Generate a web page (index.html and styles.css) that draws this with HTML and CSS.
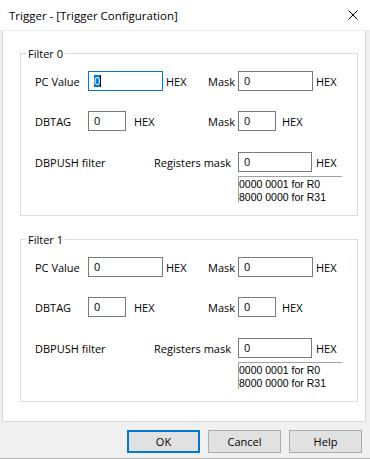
FILE: index.html
```html
<!DOCTYPE html>
<html lang="en">
<head>
    <meta charset="UTF-8">
    <title>Trigger - [Trigger Configuration]</title>
    <link rel="stylesheet" href="styles.css">
</head>
<body>
    <div class="window">
        <div class="titlebar">
            <span class="title">Trigger - [Trigger Configuration]</span>
            <svg class="close" width="10" height="10" viewBox="0 0 10 10">
                <path d="M0.5 0.5L9.5 9.5M9.5 0.5L0.5 9.5" stroke="#000" stroke-width="1" fill="none"/>
            </svg>
        </div>

        <div class="client">
            <div class="page">
                <div class="group">
                    <div class="group-title">Filter 0</div>
                    <div class="row row-1">
                        <span class="lbl lbl-first">PC Value</span>
                        <div class="edit w-long focus"><span class="sel">0</span><span class="caret"></span></div>
                        <span class="hex hex-long">HEX</span>
                        <span class="lbl lbl-mask">Mask</span>
                        <div class="edit w-long">0</div>
                        <span class="hex">HEX</span>
                    </div>
                    <div class="row row-2">
                        <span class="lbl lbl-first">DBTAG</span>
                        <div class="edit w-short">0</div>
                        <span class="hex hex-short">HEX</span>
                        <span class="lbl lbl-mask">Mask</span>
                        <div class="edit w-short">0</div>
                        <span class="hex hex-after-short">HEX</span>
                    </div>
                    <div class="row row-3">
                        <span class="lbl lbl-push">DBPUSH filter</span>
                        <span class="lbl lbl-regs">Registers mask</span>
                        <div class="edit w-regs">0</div>
                        <span class="hex hex-regs">HEX</span>
                    </div>
                    <div class="note">
                        <div class="note-line">0000 0001 for R0</div>
                        <div class="note-line">8000 0000 for R31</div>
                    </div>
                </div>

                <div class="group">
                    <div class="group-title">Filter 1</div>
                    <div class="row row-1">
                        <span class="lbl lbl-first">PC Value</span>
                        <div class="edit w-long">0</div>
                        <span class="hex hex-long">HEX</span>
                        <span class="lbl lbl-mask">Mask</span>
                        <div class="edit w-long">0</div>
                        <span class="hex">HEX</span>
                    </div>
                    <div class="row row-2">
                        <span class="lbl lbl-first">DBTAG</span>
                        <div class="edit w-short">0</div>
                        <span class="hex hex-short">HEX</span>
                        <span class="lbl lbl-mask">Mask</span>
                        <div class="edit w-short">0</div>
                        <span class="hex hex-after-short">HEX</span>
                    </div>
                    <div class="row row-3">
                        <span class="lbl lbl-push">DBPUSH filter</span>
                        <span class="lbl lbl-regs">Registers mask</span>
                        <div class="edit w-regs">0</div>
                        <span class="hex hex-regs">HEX</span>
                    </div>
                    <div class="note">
                        <div class="note-line">0000 0001 for R0</div>
                        <div class="note-line">8000 0000 for R31</div>
                    </div>
                </div>
            </div>

            <div class="buttons">
                <button class="btn default">OK</button>
                <button class="btn">Cancel</button>
                <button class="btn">Help</button>
            </div>
        </div>
    </div>
</body>
</html>
```

FILE: styles.css
```css
body {
    margin: 0;
    font-family: "Open Sans", "Noto Sans", sans-serif;
    font-size: 11px;
    color: #000;
    background: #f0f0f0;
}
.window {
    width: 370px;
    height: 459px;
    box-sizing: border-box;
    background: #f0f0f0;
    border-bottom: 1px solid #b4b4b4;
    overflow: hidden;
}
.titlebar {
    height: 30px;
    background: #fff;
    display: flex;
    align-items: center;
    padding-left: 9px;
}
.title {
    flex: 1;
    font-size: 11.5px;
}
.close {
    margin-right: 12px;
}
.client {
    padding: 0 4px 0 2px;
}
.page {
    height: 392px;
    box-sizing: border-box;
    background: #fff;
    border: 1px solid #d9d9d9;
    border-top-color: #ececec;
    padding: 22px 7px 0 17px;
}
.group {
    border: 1px solid #dcdcdc;
    padding: 0 0 12px 14px;
}
.group + .group {
    margin-top: 23px;
}
.group-title {
    display: table;
    margin: -8px 0 0 -9px;
    padding: 0 2px;
    background: #fff;
    line-height: 15px;
}
.row {
    display: flex;
    align-items: center;
    height: 20px;
}
.row-1 {
    margin-top: 10px;
}
.row-2 {
    margin-top: 20px;
}
.row-3 {
    margin-top: 21px;
}
.lbl-first {
    width: 53px;
}
.lbl-mask {
    width: 30px;
}
.lbl-push {
    width: 119px;
}
.lbl-regs {
    width: 84px;
}
.edit {
    box-sizing: border-box;
    height: 20px;
    border: 1px solid #7a7a7a;
    padding-left: 5px;
    line-height: 18px;
    background: #fff;
    display: flex;
    align-items: center;
}
.edit.focus {
    border-color: #0078d7;
}
.w-long {
    width: 75px;
}
.w-short {
    width: 38px;
}
.w-regs {
    width: 74px;
}
.sel {
    background: #0078d7;
    color: #fff;
    line-height: 12px;
}
.caret {
    width: 1px;
    height: 12px;
    background: #000;
}
.hex {
    margin-left: 3px;
}
.hex-long {
    width: 42px;
}
.hex-short {
    margin-left: 8px;
    width: 74px;
}
.hex-after-short {
    margin-left: 6px;
}
.hex-regs {
    margin-left: 4px;
}
.note {
    box-sizing: border-box;
    margin: 4px 0 0 203px;
    width: 104px;
    height: 27px;
    border-top: 1px solid #a0a0a0;
    border-left: 1px solid #a0a0a0;
    padding-top: 1px;
}
.note-line {
    height: 13px;
    line-height: 13px;
    font-family: "Liberation Sans", Arial, sans-serif;
    font-size: 10.5px;
}
.buttons {
    display: flex;
    justify-content: flex-end;
    gap: 8px;
    padding: 8px 4px 0 0;
}
.btn {
    box-sizing: border-box;
    width: 73px;
    height: 23px;
    border: 1px solid #adadad;
    background: #e1e1e1;
    font-family: inherit;
    font-size: 11px;
    color: #000;
    padding: 0;
}
.btn.default {
    border: 2px solid #0078d7;
}
```
